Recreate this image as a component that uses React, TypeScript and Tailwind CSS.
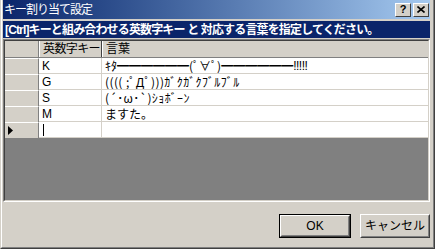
import React from "react";

const F = "font-['Liberation_Sans','Noto_Sans_CJK_JP',sans-serif]";
const J = "font-['Noto_Sans_CJK_JP',sans-serif]";

function WinBtn({ children, def }: { children: React.ReactNode; def?: boolean }) {
  if (def) {
    return (
      <div className="w-[72px] h-[24px] border border-black">
        <div className="w-full h-full border border-t-white border-l-white border-r-[#404040] border-b-[#404040]">
          <div className="w-full h-full border border-t-[#d4d0c8] border-l-[#d4d0c8] border-r-[#808080] border-b-[#808080] flex items-center justify-center text-[12px] text-black">
            {children}
          </div>
        </div>
      </div>
    );
  }
  return (
    <div className="w-[70px] h-[24px] border border-t-white border-l-white border-r-[#404040] border-b-[#404040]">
      <div className="w-full h-full border border-t-[#d4d0c8] border-l-[#d4d0c8] border-r-[#808080] border-b-[#808080] flex items-center justify-center text-[12px] text-black">
        {children}
      </div>
    </div>
  );
}

function CapBtn({ children }: { children: React.ReactNode }) {
  return (
    <div className="w-[16px] h-[14px] bg-[#d4d0c8] border border-t-white border-l-white border-r-[#404040] border-b-[#404040] flex items-center justify-center">
      {children}
    </div>
  );
}

function RowHeader({ arrow }: { arrow?: boolean }) {
  return (
    <div className="w-[34px] h-full bg-[#d4d0c8] border-t border-t-white border-r border-r-[#808080] flex items-center pl-[3px]">
      {arrow && (
        <svg width="5" height="9" viewBox="0 0 5 9">
          <path d="M0 0 L5 4.5 L0 9 Z" fill="black" />
        </svg>
      )}
    </div>
  );
}

function Bar() {
  return <span className={`${J} font-bold tracking-normal`}>━━━━━━</span>;
}

const rows: [string, React.ReactNode][] = [
  [
    "K",
    <>
      <span className={J}>ｷﾀ</span>
      <Bar />
      <span className={J}>(ﾟ∀ﾟ)</span>
      <Bar />
      <span className="font-['Liberation_Sans',sans-serif] tracking-[-0.5px]">!!!!!</span>
    </>,
  ],
  ["G", <span className={`${J} tracking-[0.4px]`}>(((( ;ﾟДﾟ)))ｶﾞｸｶﾞｸﾌﾞﾙﾌﾞﾙ</span>],
  ["S", <span className={`${J} tracking-[0.4px]`}>(´･ω･`)ｼｮﾎﾞｰﾝ</span>],
  ["M", <span className={J}>ますた。</span>],
];

export default function App() {
  return (
    <div className={`w-[435px] h-[249px] bg-[#d4d0c8] ${F} text-[12px] leading-[16px]`}>
      <div className="w-full h-full border-r border-b border-r-[#404040] border-b-[#404040] border-l border-l-[#d4d0c8]">
        <div className="w-full h-full border-r border-b border-r-[#808080] border-b-[#808080] border-l border-l-white pl-px pr-[3px] pb-px flex flex-col">
          {/* title bar */}
          <div className="h-[19px] bg-linear-to-r from-[#0a246a] to-[#a6caf0] flex items-center pl-[1px] pr-[1px]">
            <span className="text-white text-[12px] leading-[16px] flex-1 tracking-[-1px] whitespace-nowrap">キー割り当て設定</span>
            <div className="flex gap-[2px] items-center">
              <CapBtn>
                <span className="text-black text-[11px] font-bold leading-none font-['Liberation_Sans',sans-serif]">?</span>
              </CapBtn>
              <CapBtn>
                <svg width="8" height="7" viewBox="0 0 8 7">
                  <path d="M0.5 0.5 L7.5 6.5 M7.5 0.5 L0.5 6.5" stroke="black" strokeWidth="1.6" />
                </svg>
              </CapBtn>
            </div>
          </div>
          {/* caption band */}
          <div className="mt-[2px] h-[17px] bg-[#0a246a] flex items-center pl-[2px]">
            <span className="text-white font-bold text-[12px] leading-[16px] whitespace-nowrap tracking-[-0.85px]">
              [Ctrl]キーと組み合わせる英数字キー と 対応する言葉を指定してください。
            </span>
          </div>
          {/* grid */}
          <div className="mt-px h-[163px] border border-t-[#808080] border-l-[#808080] border-r-white border-b-white">
            <div className="w-full h-full border border-t-[#404040] border-l-[#404040] border-r-[#d4d0c8] border-b-[#d4d0c8] bg-[#808080] flex flex-col">
              {/* header row */}
              <div className="h-[17px] flex bg-[#d4d0c8] border-b border-b-[#808080]">
                <div className="w-[34px] h-full border-r border-r-[#808080]" />
                <div className="w-[63px] h-full border-l border-l-white border-r border-r-[#404040] pl-[3px] flex items-center whitespace-nowrap overflow-hidden">
                  <span className="tracking-[-0.6px]">英数字キー</span>
                </div>
                <div className="flex-1 h-full border-l border-l-white pl-[3px] flex items-center">言葉</div>
              </div>
              {rows.map(([k, v]) => (
                <div key={k} className="h-[16px] flex bg-white">
                  <RowHeader />
                  <div className="w-[63px] h-full border-b border-r border-[#d4d0c8] pl-[3px] flex items-center">{k}</div>
                  <div className="flex-1 h-full border-b border-[#d4d0c8] pl-[3px] flex items-center whitespace-nowrap overflow-hidden">
                    {v}
                  </div>
                </div>
              ))}
              <div className="h-[16px] flex bg-white">
                <RowHeader arrow />
                <div className="w-[63px] h-full border-b border-r border-[#d4d0c8] pl-[4px] flex items-center">
                  <div className="w-px h-[12px] bg-black" />
                </div>
                <div className="flex-1 h-full border-b border-[#d4d0c8]" />
              </div>
              <div className="flex-1" />
            </div>
          </div>
          {/* buttons */}
          <div className="mt-[12px] flex justify-end gap-[9px]">
            <WinBtn def>OK</WinBtn>
            <WinBtn>キャンセル</WinBtn>
          </div>
        </div>
      </div>
    </div>
  );
}
